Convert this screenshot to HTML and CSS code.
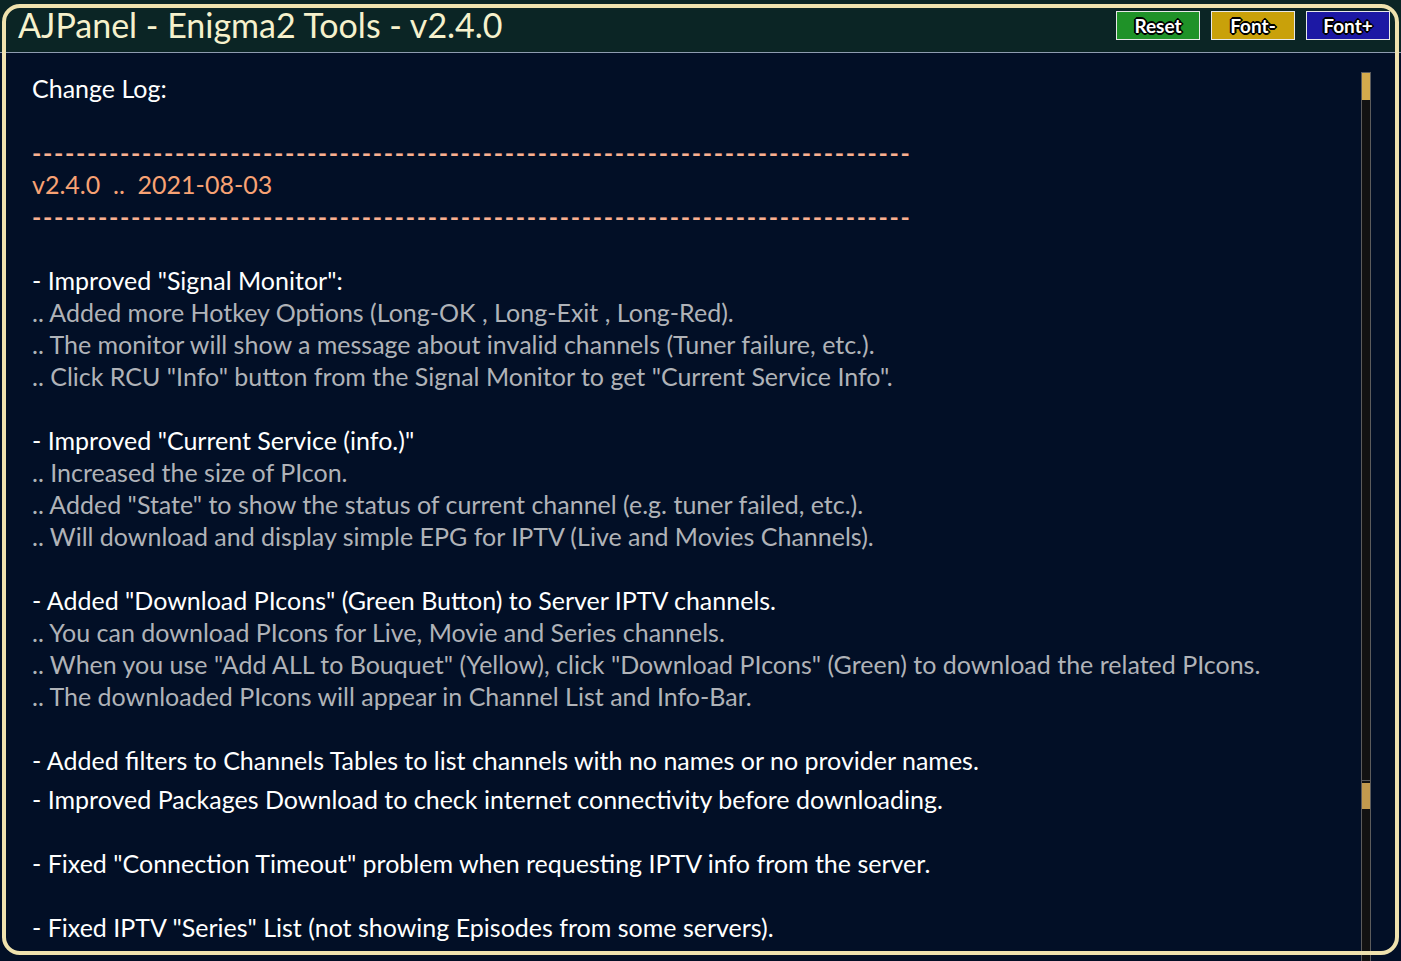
FILE: index.html
```html
<!DOCTYPE html>
<html>
<head>
<meta charset="utf-8">
<title>AJPanel - Enigma2 Tools - v2.4.0</title>
<link rel="stylesheet" href="styles.css">
</head>
<body>
<div class="window">
  <header class="titlebar">
    <h1 class="title">AJPanel - Enigma2 Tools - v2.4.0</h1>
    <div class="buttons">
      <span class="btn btn-green">Reset</span>
      <span class="btn btn-yellow">Font-</span>
      <span class="btn btn-blue">Font+</span>
    </div>
  </header>
  <main class="content">
    <div class="log">
      <div class="line head">Change Log:</div>
      <div class="line"></div>
      <div class="line dash">--------------------------------------------------------------------------------</div>
      <div class="line ver">v2.4.0&nbsp; ..&nbsp; 2021-08-03</div>
      <div class="line dash">--------------------------------------------------------------------------------</div>
      <div class="line"></div>
      <div class="line head">- Improved "Signal Monitor":</div>
      <div class="line sub">.. Added more Hotkey Options (Long-OK , Long-Exit , Long-Red).</div>
      <div class="line sub">.. The monitor will show a message about invalid channels (Tuner failure, etc.).</div>
      <div class="line sub">.. Click RCU "Info" button from the Signal Monitor to get "Current Service Info".</div>
      <div class="line"></div>
      <div class="line head">- Improved "Current Service (info.)"</div>
      <div class="line sub">.. Increased the size of PIcon.</div>
      <div class="line sub">.. Added "State" to show the status of current channel (e.g. tuner failed, etc.).</div>
      <div class="line sub">.. Will download and display simple EPG for IPTV (Live and Movies Channels).</div>
      <div class="line"></div>
      <div class="line head">- Added "Download PIcons" (Green Button) to Server IPTV channels.</div>
      <div class="line sub">.. You can download PIcons for Live, Movie and Series channels.</div>
      <div class="line sub">.. When you use "Add ALL to Bouquet" (Yellow), click "Download PIcons" (Green) to download the related PIcons.</div>
      <div class="line sub">.. The downloaded PIcons will appear in Channel List and Info-Bar.</div>
      <div class="line"></div>
      <div class="line head">- Added filters to Channels Tables to list channels with no names or no provider names.</div>
      <div class="line head gap">- Improved Packages Download to check internet connectivity before downloading.</div>
      <div class="line"></div>
      <div class="line head">- Fixed "Connection Timeout" problem when requesting IPTV info from the server.</div>
      <div class="line"></div>
      <div class="line head">- Fixed IPTV "Series" List (not showing Episodes from some servers).</div>
    </div>
    <div class="scrollbar">
      <div class="thumb"></div>
      <div class="track-gap"></div>
      <div class="thumb thumb-low"></div>
    </div>
  </main>
  <div class="frame"></div>
</div>
</body>
</html>
```

FILE: styles.css
```css
html, body {
  margin: 0;
  padding: 0;
  background: #020f26;
  overflow: hidden;
}

.window {
  position: relative;
  width: 1401px;
  height: 961px;
  display: flex;
  flex-direction: column;
  font-family: Lato, "Open Sans", sans-serif;
}

.titlebar {
  height: 52px;
  background: #0b2525;
  border-bottom: 1px solid #8e9cb0;
  display: flex;
  align-items: center;
  justify-content: space-between;
  padding: 0 11px 0 18px;
  box-sizing: content-box;
}

.title {
  margin: 0;
  font-weight: 400;
  font-size: 34px;
  color: #f6f1cc;
  line-height: 1;
  margin-top: -2px;
}

.buttons {
  display: flex;
  gap: 11px;
  margin-top: -1px;
}

.btn {
  width: 82px;
  height: 27px;
  border: 1px solid #e8e8e8;
  display: flex;
  align-items: center;
  justify-content: center;
  color: #ffffff;
  font-size: 19px;
  font-weight: 700;
  text-shadow: -1px -1px 0 #000, 1px -1px 0 #000, -1px 1px 0 #000, 1px 1px 0 #000,
    0 2px 0 #000, 0 -2px 0 #000, 2px 0 0 #000, -2px 0 0 #000;
}

.btn-green { background: #1f9228; }
.btn-yellow { background: #c9a10a; }
.btn-blue { background: #1c18a4; }

.content {
  flex: 1;
  display: flex;
  padding-left: 32px;
  padding-top: 19px;
  min-height: 0;
}

.log {
  flex: 1;
  font-size: 25px;
}

.line {
  height: 32px;
  line-height: 32px;
  white-space: nowrap;
}

.head { color: #ffffff; }
.sub { color: #b0b3b8; }
.ver { color: #f8a274; }
.dash {
  color: #f9b090;
  letter-spacing: 1.67px;
  font-weight: 700;
}
.gap { margin-top: 7px; }

.scrollbar {
  width: 8px;
  margin-right: 30px;
  border: 1px solid #5c5c5c;
  border-bottom: none;
  background: #121212;
  display: flex;
  flex-direction: column;
}

.thumb {
  height: 27px;
  background: #d5ab4c;
}

.track-gap {
  height: 680px;
  border-bottom: 1px solid #5c5c5c;
  margin-bottom: 2px;
}

.thumb-low {
  height: 26px;
  background: #c29a4e;
}

.frame {
  position: absolute;
  left: 2px;
  top: 4px;
  width: 1397px;
  height: 951px;
  box-sizing: border-box;
  border: 4px solid #efe2ae;
  border-radius: 18px;
  pointer-events: none;
}
```
